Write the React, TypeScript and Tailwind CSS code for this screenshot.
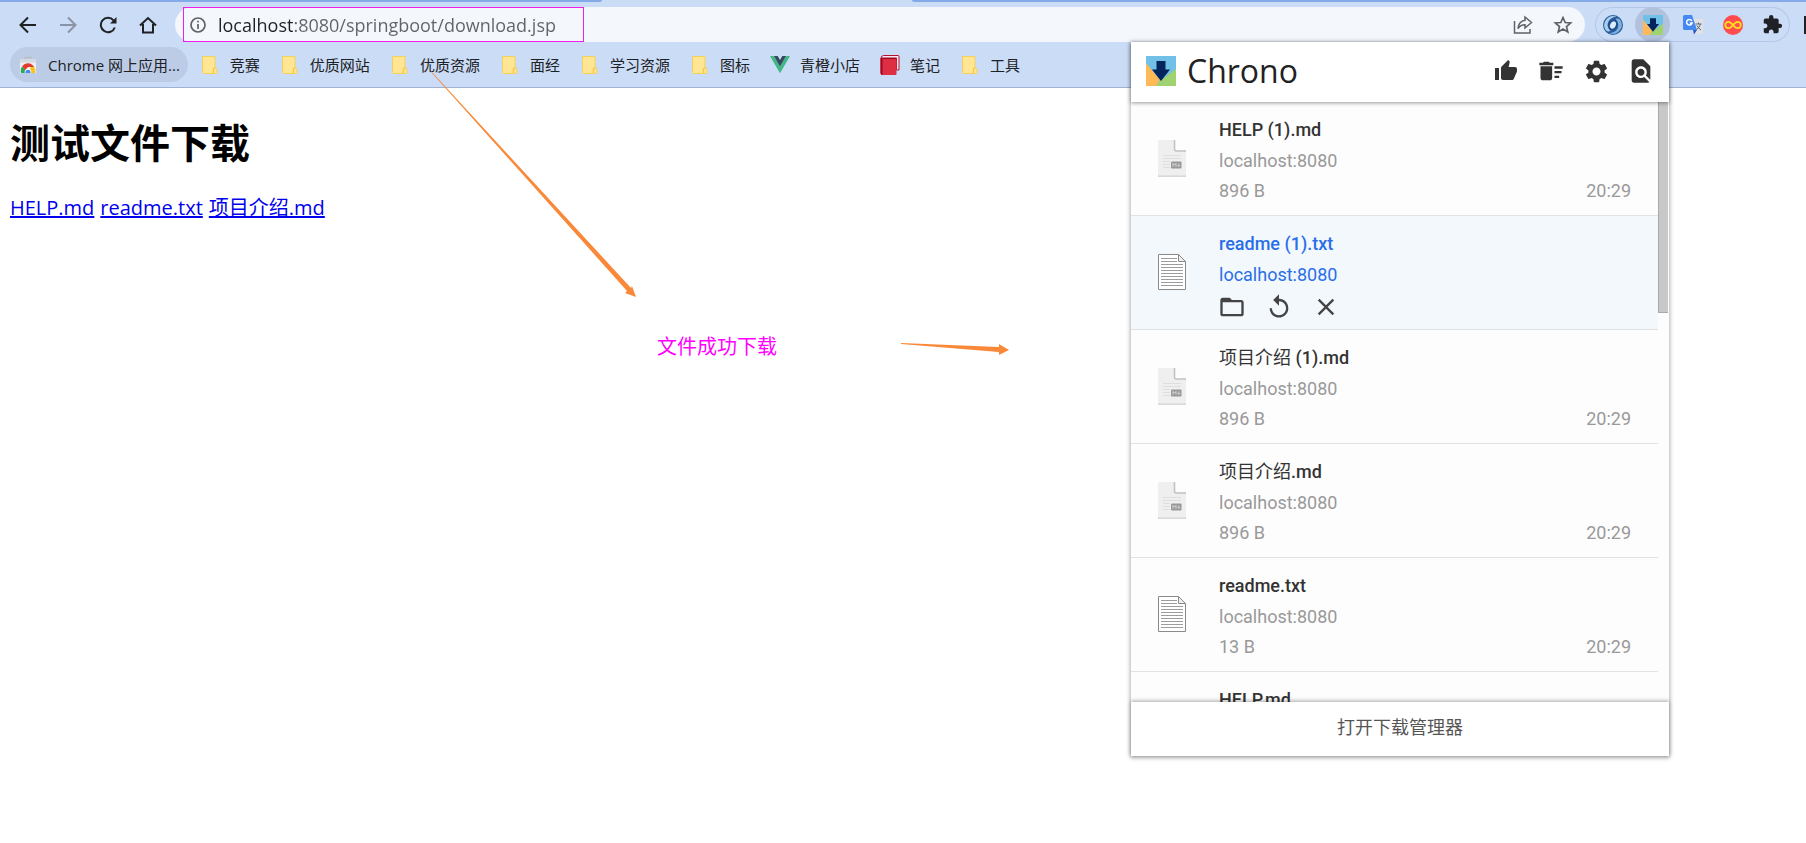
import type { ReactNode } from 'react';
import {
  MdClose,
  MdDeleteSweep,
  MdExtension,
  MdFindInPage,
  MdFolderOpen,
  MdReplay,
  MdSettings,
  MdThumbUp,
} from 'react-icons/md';

type FileKind = 'md' | 'txt';

interface Download {
  id: number;
  name: string;
  host: string;
  size: string;
  time: string;
  kind: FileKind;
  active?: boolean;
}

const DOWNLOADS: Download[] = [
  { id: 6, name: 'HELP (1).md', host: 'localhost:8080', size: '896 B', time: '20:29', kind: 'md' },
  { id: 5, name: 'readme (1).txt', host: 'localhost:8080', size: '13 B', time: '20:29', kind: 'txt', active: true },
  { id: 4, name: '项目介绍 (1).md', host: 'localhost:8080', size: '896 B', time: '20:29', kind: 'md' },
  { id: 3, name: '项目介绍.md', host: 'localhost:8080', size: '896 B', time: '20:29', kind: 'md' },
  { id: 2, name: 'readme.txt', host: 'localhost:8080', size: '13 B', time: '20:29', kind: 'txt' },
  { id: 1, name: 'HELP.md', host: 'localhost:8080', size: '896 B', time: '20:29', kind: 'md' },
];

const BOOKMARKS: { label: string; icon: 'store' | 'folder' | 'vue' | 'book' }[] = [
  { label: 'Chrome 网上应用...', icon: 'store' },
  { label: '竞赛', icon: 'folder' },
  { label: '优质网站', icon: 'folder' },
  { label: '优质资源', icon: 'folder' },
  { label: '面经', icon: 'folder' },
  { label: '学习资源', icon: 'folder' },
  { label: '图标', icon: 'folder' },
  { label: '青橙小店', icon: 'vue' },
  { label: '笔记', icon: 'book' },
  { label: '工具', icon: 'folder' },
];

const PAGE_FILES = ['HELP.md', 'readme.txt', '项目介绍.md'];

function StoreIcon() {
  return (
    <svg width="20" height="20" viewBox="0 0 20 20" aria-hidden="true">
      <path d="M7 4.500V2.500h6v2" fill="none" stroke="#b9bec6" strokeWidth="1.400" />
      <path d="M2 4.500h16V18H2z" fill="#eceef1" />
      <path d="M2 4.500h16v3H2z" fill="#d5d9df" />
      <path d="M3.200 18a6.800 6.800 0 0 1 1-6.500L8 15v3z" fill="#2da94f" />
      <path d="M4.200 11.500a7 7 0 0 1 12 .5H10l-2.500 3z" fill="#e33b2e" />
      <path d="M16.200 12a7 7 0 0 1 .7 6H11l1.800-6z" fill="#fbc116" />
      <path d="M6.800 18a3.400 3.400 0 1 1 6.400 0z" fill="#fff" />
      <path d="M7.500 18a2.600 2.600 0 1 1 5 0z" fill="#4688f1" />
    </svg>
  );
}

function FolderIcon() {
  return (
    <svg width="20" height="20" viewBox="0 0 20 20" aria-hidden="true">
      <path d="M2.500 1.500h12.500v11.500l2 1v3.500q0 1-1 1H3.500q-1 0-1-1z" fill="#ffe594" stroke="#f6d15a" />
      <path d="M13.500 18v-4l1.500-1.500" fill="none" stroke="#f3c944" strokeWidth="1.300" />
    </svg>
  );
}

function VueIcon() {
  return (
    <svg width="20" height="20" viewBox="0 0 20 20" aria-hidden="true">
      <path d="M0 1h4l6 10.400L16 1h4L10 18.300z" fill="#41b883" />
      <path d="M4 1h3.700L10 5l2.300-4H16l-6 10.400z" fill="#35495e" />
    </svg>
  );
}

function BookIcon() {
  return (
    <svg width="20" height="20" viewBox="0 0 20 20" aria-hidden="true">
      <path d="M3.500.5h14.500q1 0 1 1V15h-2.500V3H1Q1.500.5 3.500.5z" fill="#f3e9ee" stroke="#b3122f" />
      <path d="M1 3.500h14.500q1 0 1 1V19q0 1-1 1H2.500Q.5 20 .5 18V3z" fill="#dd2e44" />
      <path d="M.5 3h2V20q-2 0-2-2z" fill="#a0041e" />
      <path d="M2.500 3.500H16" stroke="#a0041e" />
    </svg>
  );
}

const BOOKMARK_ICONS: Record<string, () => ReactNode> = {
  store: StoreIcon,
  folder: FolderIcon,
  vue: VueIcon,
  book: BookIcon,
};

function ChronoLogo({ size }: { size: number }) {
  return (
    <svg width={size} height={size} viewBox="0 0 30 30" aria-hidden="true">
      <path d="M0 0h30v30H0z" fill="#70c0e8" />
      <path d="M0 7l14 17-4 6H0z" fill="#ffba55" />
      <path d="M30 13v17H10l5-6z" fill="#a0d36f" />
      <path d="M10.500 5h9v8.500H24L15 25 6 13.500h4.500z" fill="#04245c" />
    </svg>
  );
}

function SwirlIcon() {
  return (
    <svg width="22" height="22" viewBox="0 0 22 22" aria-hidden="true">
      <circle cx="11" cy="11" r="10" fill="#285c9b" />
      <path d="M4 16.500A9 9 0 0 1 14.500 2.800Q8 3.500 6 8.500 4.500 12.500 8.500 17 6 18 4 16.500z" fill="#a9cdee" />
      <path d="M18 5.500A9 9 0 0 1 7.500 19.200Q14 18.500 16 13.500 17.500 9.500 13.500 5 16 4 18 5.500z" fill="#7fb0de" />
      <ellipse cx="11" cy="11" rx="4.600" ry="5.600" fill="#1e4f8e" transform="rotate(25 11 11)" />
      <ellipse cx="11" cy="11" rx="2.700" ry="3.900" fill="#dcecfa" transform="rotate(25 11 11)" />
    </svg>
  );
}

function TranslateIcon() {
  return (
    <svg width="20" height="20" viewBox="0 0 20 20" aria-hidden="true">
      <path d="M8 4h11q1 0 1 1v13q0 1-1 1h-8z" fill="#dfe1e5" />
      <path d="M12.500 9h6M15.500 7.500V9m2 0q-1 4-4.500 6m1-4.500q1.500 3 4 4.500" fill="none" stroke="#5f6b76" />
      <path d="M1.500 0H9l5 15H1.500Q0 15 0 13.500v-12Q0 0 1.500 0z" fill="#4688f1" />
      <path d="M10 15h4l-3 4.500z" fill="#2a56c6" />
      <path d="M8.800 5.800a2.800 2.800 0 1 0 .3 2.200H6.800" fill="none" stroke="#fff" strokeWidth="1.500" />
    </svg>
  );
}

function InfinityIcon() {
  return (
    <svg width="20" height="20" viewBox="0 0 20 20" aria-hidden="true">
      <circle cx="10" cy="10" r="10" fill="#ff4d4d" />
      <path
        d="M10 10C8 7.600 7 6.800 5.500 6.800a3.200 3.200 0 0 0 0 6.400C7 13.200 8 12.400 10 10s3-3.200 4.500-3.200a3.200 3.200 0 0 1 0 6.400C13 13.200 12 12.400 10 10z"
        fill="none"
        stroke="#ffe21f"
        strokeWidth="1.800"
      />
    </svg>
  );
}

function FileIcon({ kind }: { kind: FileKind }) {
  if (kind === 'txt') {
    return (
      <svg width="28" height="38" viewBox="0 0 28 38" aria-hidden="true">
        <path d="M.5.500h20l7 7v28H.5z" fill="#fff" stroke="#8a8a8a" />
        <path
          d="M3 4.500h16M3 7.500h16M3 10.500h22M3 13.500h22M3 16.500h22M3 19.500h22M3 22.500h22M3 25.500h22M3 28.500h22M3 31.500h22"
          stroke="#9c9c9c"
        />
        <path d="M20.500.500v7h7z" fill="#eee" stroke="#8a8a8a" />
      </svg>
    );
  }
  return (
    <svg width="28" height="38" viewBox="0 0 28 38" aria-hidden="true">
      <path d="M1 0h15.500L28 10.500V36.500H0V1z" fill="#efefef" />
      <path d="M0 35.500h28v1.300H0z" fill="#d3d3d3" />
      <path d="M16.500 0L28 10.500H16.500z" fill="#fdfdfd" />
      <path d="M16.500 0V9q0 2 2 2H28" fill="none" stroke="#c2c2c2" strokeWidth="1.600" />
      <path d="M5 15.500h18M5 18.500h18M5 21.500h7M5 24.500h7M5 27.500h7" stroke="#dedede" />
      <rect x="13" y="21.500" width="10.500" height="7" rx="1" fill="#989898" />
      <path d="M15 26.800v-3.400l1.500 1.600 1.500-1.600v3.400M20.800 23.400v3m-1.200-1.200l1.200 1.200 1.200-1.200" fill="none" stroke="#e6e6e6" strokeWidth=".8" />
    </svg>
  );
}

function IconButton({ label, children }: { label: string; children: ReactNode }) {
  return (
    <button
      type="button"
      aria-label={label}
      className="flex size-7 shrink-0 items-center justify-center"
    >
      {children}
    </button>
  );
}

function TabStrip() {
  return (
    <div className="flex h-[2px] gap-[310px]">
      <div className="w-1/3 rounded-br-lg bg-[#84abe7]" />
      <div className="flex-1 rounded-bl-lg bg-[#84abe7]" />
    </div>
  );
}

function NavButtons() {
  return (
    <nav className="flex items-center gap-3 text-[#202124]">
      <IconButton label="Back">
        <svg width="18" height="18" viewBox="0 0 18 18" fill="none" stroke="currentColor" strokeWidth="2">
          <path d="M17 9H2M9 1.500L1.500 9 9 16.500" />
        </svg>
      </IconButton>
      <IconButton label="Forward">
        <svg width="18" height="18" viewBox="0 0 18 18" fill="none" stroke="#8a93a5" strokeWidth="2">
          <path d="M1 9h15M9 1.500L16.500 9 9 16.500" />
        </svg>
      </IconButton>
      <IconButton label="Reload">
        <svg width="18" height="18" viewBox="0 0 18 18" fill="none" stroke="currentColor" strokeWidth="2">
          <path d="M15.800 11.500A7.200 7.200 0 1 1 14.500 4.300" />
          <path d="M17.500 1v6.500H11z" fill="currentColor" stroke="none" />
        </svg>
      </IconButton>
      <IconButton label="Home">
        <svg width="18" height="18" viewBox="0 0 18 18" fill="none" stroke="currentColor" strokeWidth="2">
          <path d="M1 9.500L9 2l8 7.500M4 8v8.500h10V8" />
        </svg>
      </IconButton>
    </nav>
  );
}

function AddressBar() {
  return (
    <div className="relative flex h-[35px] flex-1 items-center rounded-full bg-[#f4f7fc] pr-2 pl-[15px] text-[#5f6368]">
      <svg width="16" height="16" viewBox="0 0 16 16" fill="none" stroke="currentColor" strokeWidth="1.700" aria-hidden="true">
        <circle cx="8" cy="8" r="7" />
        <path d="M8 7v5M8 3.800v1.800" />
      </svg>
      <input
        type="text"
        aria-label="Address"
        defaultValue="localhost:8080/springboot/download.jsp"
        className="ml-3 min-w-0 flex-1 bg-linear-[90deg,#202124_76px,#5f6368_76px] bg-clip-text font-['Open_Sans',sans-serif] text-lg text-transparent outline-none"
      />
      <div className="flex items-center gap-3">
        <IconButton label="Share">
          <svg width="20" height="20" viewBox="0 0 20 20" fill="none" stroke="currentColor" strokeWidth="1.500">
            <path d="M1.500 6v12h15.500v-4" />
            <path d="M12 2l6.500 5.500L12 13v-3.200q-4.500 0-7 3.700.8-7.300 7-8.200z" />
          </svg>
        </IconButton>
        <IconButton label="Bookmark">
          <svg width="20" height="20" viewBox="0 0 20 20" fill="none" stroke="currentColor" strokeWidth="1.700">
            <path d="M10 2.500l2.200 5 5.500.5-4.200 3.600 1.300 5.400-4.800-2.900L5.200 17l1.300-5.400L2.300 8l5.500-.5z" />
          </svg>
        </IconButton>
      </div>
      <div className="pointer-events-none absolute inset-y-0 left-2 w-[401px] border border-[#f01fe8]" />
    </div>
  );
}

function Extensions() {
  return (
    <div className="flex h-[35px] items-center gap-[5px] rounded-full text-[#202124] ring-1 ring-[#b3c7e8] ring-inset">
      {[
        { label: 'IDM', icon: <SwirlIcon /> },
        { label: 'Chrono', icon: <ChronoLogo size={20} /> },
        { label: 'Translate', icon: <TranslateIcon /> },
        { label: 'Infinity', icon: <InfinityIcon /> },
        { label: 'Extensions', icon: <MdExtension size={21} /> },
      ].map(({ label, icon }) => (
        <button
          key={label}
          type="button"
          aria-label={label}
          className={`flex size-[35px] items-center justify-center rounded-full ${
            label === 'Chrono' ? 'bg-[#b3c2dc]' : ''
          }`}
        >
          {icon}
        </button>
      ))}
    </div>
  );
}

function BookmarkBar() {
  return (
    <div className="flex items-center gap-1 px-[10px] py-[5px]">
      {BOOKMARKS.map(({ label, icon }) => {
        const Icon = BOOKMARK_ICONS[icon];
        return (
          <a
            key={label}
            href="#"
            className={`flex h-[35px] items-center gap-[10px] rounded-full px-2 font-['Open_Sans','Noto_Sans_CJK_SC',sans-serif] text-[15px] whitespace-nowrap text-[#202124] ${
              icon === 'store' ? 'bg-[#bccce6]' : ''
            }`}
          >
            <Icon />
            <span className="pt-px">{label}</span>
          </a>
        );
      })}
    </div>
  );
}

// Chinese runs stay at regular weight, the rest of the name is medium
function FileName({ name }: { name: string }) {
  return name.split(/([\u4e00-\u9fff]+)/).map((part, i) =>
    i % 2 === 1 ? (
      <span key={i} className="font-normal">
        {part}
      </span>
    ) : (
      part
    ),
  );
}

function DownloadRow({ item }: { item: Download }) {
  return (
    <li
      className={`flex h-[114px] items-center border-b border-[#e0e2e4] px-[27px] text-lg ${
        item.active ? 'bg-[#f3f8fd] text-[#2a6fe8]' : 'text-[#999]'
      }`}
    >
      <FileIcon kind={item.kind} />
      <div className="ml-[33px] flex-1 self-start pt-[13px]">
        <p className={`leading-[30px] font-medium ${item.active ? '' : 'text-[#333]'}`}>
          <FileName name={item.name} />
        </p>
        <p className="leading-8">{item.host}</p>
        {item.active ? (
          <div className="-ml-px flex h-8 items-center gap-[19px] text-[#444]">
            <IconButton label="Open folder">
              <MdFolderOpen size={28} />
            </IconButton>
            <IconButton label="Download again">
              <MdReplay size={28} />
            </IconButton>
            <IconButton label="Remove">
              <MdClose size={28} />
            </IconButton>
          </div>
        ) : (
          <p className="flex justify-between leading-7">
            <span>{item.size}</span>
            <span>{item.time}</span>
          </p>
        )}
      </div>
    </li>
  );
}

function ChronoPopup() {
  return (
    <aside className="absolute top-[42px] right-[137px] z-10 w-[538px] bg-white font-['Roboto','Noto_Sans_CJK_SC',sans-serif] shadow-[0_1px_4px_1px_rgba(0,0,0,0.3)]">
      <header className="relative z-10 flex h-[60px] items-center bg-white pr-[14px] pb-[2px] pl-[15px] text-[#333] shadow-[0_1px_4px_rgba(0,0,0,0.4)]">
        <ChronoLogo size={30} />
        <h2 className="ml-[11px] flex-1 font-['Open_Sans',sans-serif] text-[32px] text-[#222]">Chrono</h2>
        <div className="flex items-center gap-[17px]">
          <IconButton label="Like">
            <MdThumbUp size={24} />
          </IconButton>
          <IconButton label="Clear list">
            <MdDeleteSweep size={28} />
          </IconButton>
          <IconButton label="Settings">
            <MdSettings size={27} />
          </IconButton>
          <IconButton label="Search">
            <MdFindInPage size={28} />
          </IconButton>
        </div>
      </header>
      <div className="flex max-h-[600px] overflow-hidden bg-[#fdfdfd] pr-px">
        <ul className="flex-1">
          {DOWNLOADS.map((item) => (
            <DownloadRow key={item.id} item={item} />
          ))}
        </ul>
        <div className="w-[10px]">
          <div className="h-[211px] border-b border-l border-[#aaa] bg-[#c8c8c8]" />
        </div>
      </div>
      <footer className="relative bg-white shadow-[0_-1px_4px_rgba(0,0,0,0.35)]">
        <button type="button" className="h-[54px] w-full pb-[2px] text-lg text-[#555]">
          打开下载管理器
        </button>
      </footer>
    </aside>
  );
}

function Annotations() {
  return (
    <>
      <svg className="pointer-events-none absolute top-0 left-0" width="1020" height="360" fill="#f98938" aria-hidden="true">
        <path d="M431 71l200 217 1-2 4 11-11-4 2-2L431 72z" />
        <path d="M901 343l98 4v-3l10 6-10 5v-3l-98-8z" />
      </svg>
      <p className="pointer-events-none absolute top-[331px] left-[657px] font-['Noto_Sans_CJK_SC',sans-serif] text-xl leading-[30px] text-[#f0f]">
        文件成功下载
      </p>
    </>
  );
}

export default function App() {
  return (
    <div className="relative min-h-screen overflow-hidden bg-white">
      <header className="border-b border-[#9fb2d4] bg-[#cbdcf6]">
        <TabStrip />
        <div className="flex items-center pt-[5px] pl-[14px]">
          <NavButtons />
          <div className="ml-[13px] flex flex-1 items-center gap-[10px]">
            <AddressBar />
            <Extensions />
          </div>
          <div className="ml-[14px] h-[18px] w-[2px] bg-[#202124]" />
        </div>
        <BookmarkBar />
      </header>

      <main className="px-[10px] font-['Open_Sans','Noto_Sans_CJK_SC',sans-serif] text-black">
        <h1 className="pt-[25px] text-[40px] leading-[60px] font-bold">测试文件下载</h1>
        <p className="mt-5 flex gap-[6px] text-xl leading-[30px]">
          {PAGE_FILES.map((file) => (
            <a key={file} href={`#${file}`} className="text-[#0000ee] underline">
              {file}
            </a>
          ))}
        </p>
      </main>

      <ChronoPopup />
      <Annotations />
    </div>
  );
}
